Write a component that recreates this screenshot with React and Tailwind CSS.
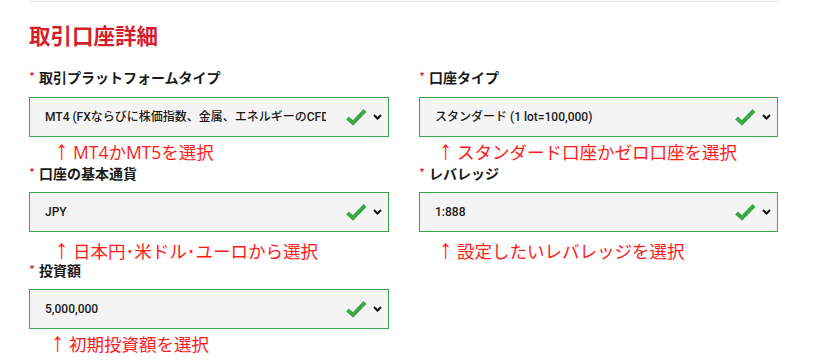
import React from 'react';

const CHECK_GREEN = '#3aa845';

function CheckIcon() {
  return (
    <svg width="21" height="18" viewBox="0 0 21 18" className="shrink-0">
      <path d="M1.5 10 L7 15 L19 2.5" fill="none" stroke={CHECK_GREEN} strokeWidth="4" />
    </svg>
  );
}

function Chevron() {
  return (
    <svg width="9" height="6" viewBox="0 0 9 6" className="shrink-0">
      <path d="M1 1 L4.5 4.5 L8 1" fill="none" stroke="#111" strokeWidth="2" />
    </svg>
  );
}

// one form field: label, select-like box, and the red note under it
function Field({ label, value, note, labelGap, noteClass, notePad }) {
  return (
    <div>
      <div className="h-[20px] leading-[20px] text-[14px] font-semibold text-[#1a1a1a] flex items-center">
        <span className="w-[10px] text-[13px] text-[#d6202e] font-normal">*</span>
        <span>{label}</span>
      </div>
      <div className={`${labelGap} h-[40px] border border-[#3ba54b] bg-[#f4f4f4] flex items-center pl-[15px] pr-[6px]`}>
        <div className="flex-1 min-w-0 overflow-hidden whitespace-nowrap mr-[20px] text-[12px] font-medium text-[#1a1a1a] font-['Roboto','Noto_Sans_CJK_JP',sans-serif]">
          {value}
        </div>
        <CheckIcon />
        <div className="w-[6px]" />
        <Chevron />
      </div>
      {note && (
        <div className={`${noteClass} ${notePad} flex items-baseline text-[17.5px] leading-[22px] text-[#ff1a1a] whitespace-nowrap font-['Open_Sans','Noto_Sans_CJK_JP',sans-serif]`}>
          <span className="w-[16px] shrink-0 -ml-[1px] mr-[2px] text-[27px] leading-[22px] font-['Liberation_Sans',sans-serif]">↑</span>
          <span>{note}</span>
        </div>
      )}
    </div>
  );
}

export default function App() {
  return (
    <div className="w-[821px] h-[360px] bg-white overflow-hidden font-['Noto_Sans_CJK_JP',sans-serif]">
      <div className="ml-[29px] w-[749px] mt-px border-t border-[#e3e3e3]">
        <h2 className="mt-[19px] h-[28px] leading-[28px] text-[21.5px] font-bold text-[#d51f2c]">取引口座詳細</h2>

        <div className="mt-[18px] grid grid-cols-[360px_359px] gap-x-[30px]">
          <Field
            label="取引プラットフォームタイプ"
            value="MT4 (FXならびに株価指数、金属、エネルギーのCFD)"
            note="MT4かMT5を選択"
            labelGap="mt-[10px]"
            noteClass="h-[26px] pt-[2px]"
            notePad="pl-[27px]"
          />
          <Field
            label="口座タイプ"
            value="スタンダード (1 lot=100,000)"
            note="スタンダード口座かゼロ口座を選択"
            labelGap="mt-[10px]"
            noteClass="h-[26px] pt-[2px]"
            notePad="pl-[21px]"
          />
          <Field
            label="口座の基本通貨"
            value="JPY"
            note="日本円･米ドル･ユーロから選択"
            labelGap="mt-[9px]"
            noteClass="h-[28px] pt-[6px]"
            notePad="pl-[27px]"
          />
          <Field
            label="レバレッジ"
            value="1:888"
            note="設定したいレバレッジを選択"
            labelGap="mt-[9px]"
            noteClass="h-[28px] pt-[6px]"
            notePad="pl-[21px]"
          />
          <Field
            label="投資額"
            value="5,000,000"
            note="初期投資額を選択"
            labelGap="mt-[9px]"
            noteClass="pt-[2px]"
            notePad="pl-[23px]"
          />
        </div>
      </div>
    </div>
  );
}
